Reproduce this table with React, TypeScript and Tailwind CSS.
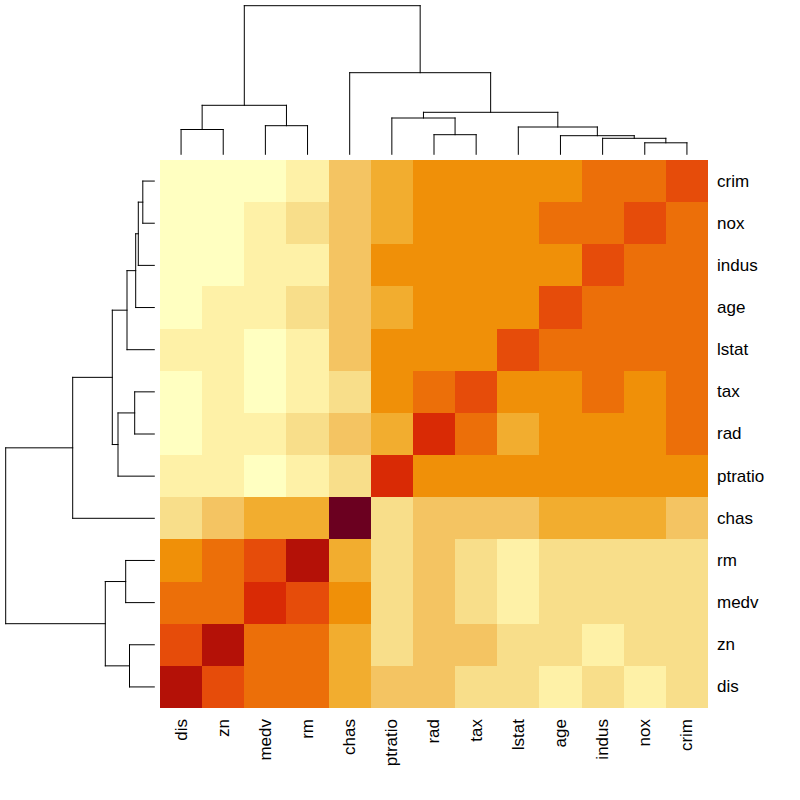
const CELL = 548 / 13;
const LEAF_END = 154.3;

const cols = ["dis", "zn", "medv", "rm", "chas", "ptratio", "rad", "tax", "lstat", "age", "indus", "nox", "crim"];
const rows = ["crim", "nox", "indus", "age", "lstat", "tax", "rad", "ptratio", "chas", "rm", "medv", "zn", "dis"];

// colour levels, light yellow -> dark red
const shades = [
  "",
  "bg-[#FFFFC1]",
  "bg-[#FEF1A7]",
  "bg-[#F8DE8A]",
  "bg-[#F4C462]",
  "bg-[#F2AD2F]",
  "bg-[#F09008]",
  "bg-[#EC6F09]",
  "bg-[#E64C0A]",
  "bg-[#D92A05]",
  "bg-[#B41107]",
  "bg-[#6B0020]",
];

const levels = [
  [1, 1, 1, 2, 4, 5, 6, 6, 6, 6, 7, 7, 8],
  [1, 1, 2, 3, 4, 5, 6, 6, 6, 7, 7, 8, 7],
  [1, 1, 2, 2, 4, 6, 6, 6, 6, 6, 8, 7, 7],
  [1, 2, 2, 3, 4, 5, 6, 6, 6, 8, 7, 7, 7],
  [2, 2, 1, 2, 4, 6, 6, 6, 8, 7, 7, 7, 7],
  [1, 2, 1, 2, 3, 6, 7, 8, 6, 6, 7, 6, 7],
  [1, 2, 2, 3, 4, 5, 9, 7, 5, 6, 6, 6, 7],
  [2, 2, 1, 2, 3, 9, 6, 6, 6, 6, 6, 6, 6],
  [3, 4, 5, 5, 11, 3, 4, 4, 4, 5, 5, 5, 4],
  [6, 7, 8, 10, 5, 3, 4, 3, 2, 3, 3, 3, 3],
  [7, 7, 9, 8, 6, 3, 4, 3, 2, 3, 3, 3, 3],
  [8, 10, 7, 7, 5, 3, 4, 4, 3, 3, 2, 3, 3],
  [10, 8, 7, 7, 5, 4, 4, 3, 3, 2, 3, 2, 3],
];

// leaf = column index, node = [height, left, right]
type Node = number | [number, Node, Node];

const tree: Node = [
  5.7,
  [105.3, [129.5, 0, 1], [125.7, 2, 3]],
  [
    72.7,
    4,
    [112.3, [118, 5, [134.7, 6, 7]], [127, 8, [135.7, 9, [138.3, 10, [142.8, 11, 12]]]]],
  ],
];

type Seg = [number, number, number, number]; // pos1, h1, pos2, h2

function walk(node: Node, posOf: (i: number) => number, segs: Seg[]): { pos: number; h: number } {
  if (typeof node === "number") return { pos: posOf(node), h: LEAF_END };
  const [h, l, r] = node;
  const a = walk(l, posOf, segs);
  const b = walk(r, posOf, segs);
  segs.push([a.pos, h, b.pos, h]);
  segs.push([a.pos, h, a.pos, a.h]);
  segs.push([b.pos, h, b.pos, b.h]);
  return { pos: (a.pos + b.pos) / 2, h };
}

function Dendrogram({ side }: { side: "top" | "left" }) {
  const segs: Seg[] = [];
  if (side === "top") walk(tree, (c) => CELL * (c + 0.5), segs);
  else walk(tree, (c) => CELL * (12 - c + 0.5), segs);
  const w = side === "top" ? 548 : 160;
  const h = side === "top" ? 160 : 548;
  return (
    <svg width={w} height={h} className="block shrink-0">
      {segs.map(([p1, h1, p2, h2], i) =>
        side === "top" ? (
          <line key={i} x1={p1} y1={h1} x2={p2} y2={h2} stroke="#000" strokeWidth={1} strokeLinecap="square" />
        ) : (
          <line key={i} x1={h1} y1={p1} x2={h2} y2={p2} stroke="#000" strokeWidth={1} strokeLinecap="square" />
        )
      )}
    </svg>
  );
}

export default function App() {
  return (
    <div
      className="w-[800px] h-[800px] bg-white text-black overflow-hidden"
      style={{ fontFamily: '"Liberation Sans", Arial, sans-serif' }}
    >
      {/* column dendrogram */}
      <div className="flex h-[160px]">
        <div className="w-[160px] shrink-0" />
        <Dendrogram side="top" />
      </div>

      <div className="flex">
        {/* row dendrogram */}
        <Dendrogram side="left" />

        {/* heat map */}
        <div className="grid grid-cols-[repeat(13,minmax(0,1fr))] grid-rows-[repeat(13,minmax(0,1fr))] w-[548px] h-[548px] shrink-0">
          {levels.map((row, r) =>
            row.map((lv, c) => <div key={`${r}-${c}`} className={shades[lv]} />)
          )}
        </div>

        {/* row labels */}
        <div className="grid grid-rows-[repeat(13,minmax(0,1fr))] h-[548px] pl-[9px]">
          {rows.map((name) => (
            <div key={name} className="flex items-center text-[17px] leading-none">
              {name}
            </div>
          ))}
        </div>
      </div>

      {/* column labels */}
      <div className="ml-[160px] w-[548px] grid grid-cols-[repeat(13,minmax(0,1fr))] pt-[11px]">
        {cols.map((name) => (
          <div key={name} className="flex justify-center items-start">
            <span className="[writing-mode:vertical-rl] rotate-180 text-[17px] leading-none">{name}</span>
          </div>
        ))}
      </div>
    </div>
  );
}
